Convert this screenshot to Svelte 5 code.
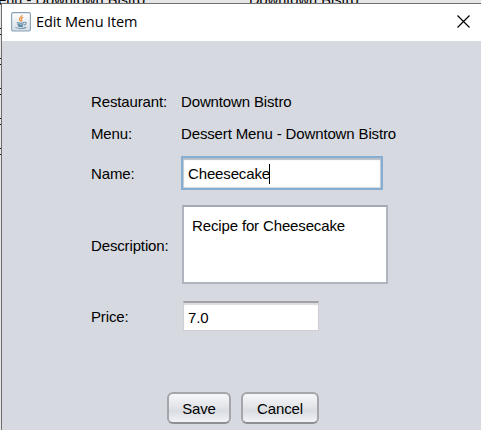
<script>
  let name = $state('Cheesecake');
  let description = $state('Recipe for Cheesecake');
  let price = $state('7.0');
</script>

<div class="desktop">
  <div class="behind">
    <span class="first">Menu - Downtown Bistro</span>
    <span class="second">Downtown Bistro</span>
  </div>
  <div class="ticks">
    {#each [0, 1, 2, 3, 4] as tick (tick)}
      <i></i>
    {/each}
  </div>

  <section class="dialog">
    <header>
      <svg class="java" width="20" height="20" viewBox="0 0 20 20">
        <defs>
          <linearGradient id="tile" x1="0" y1="0" x2="0" y2="1">
            <stop offset="0" stop-color="#fff" />
            <stop offset="1" stop-color="#d5dde5" />
          </linearGradient>
        </defs>
        <rect x=".6" y=".6" width="18.8" height="18.4" rx="1.5" fill="url(#tile)" stroke="#87a0b5" stroke-width="1.1" />
        <path d="M10.8 3c.8 1.8-2.6 2.6-2.4 4.4.1 1 1 1.4 1.2 2.2M12.4 5.2c-2.3 1-2.5 1.9-1.7 2.7.5.6.2 1.1-.3 1.6" fill="none" stroke="#e99343" stroke-width="1.2" />
        <path d="M5.8 10.6c1.5.9 6 .8 7.4 0M6.6 12.4c1.6.8 4.4.8 5.8 0M7.2 14c1.3.5 3.6.5 4.6 0" fill="none" stroke="#5382a1" stroke-width="1.2" />
        <path d="M13.3 10.4c2.4-.7 2.6 2-.2 2.7M4.4 15.4c2 1.4 8.8 1.4 10.8-.2" fill="none" stroke="#6f94ae" stroke-width="1.1" />
      </svg>
      <h1>Edit Menu Item</h1>
      <svg class="close" width="13" height="13" viewBox="0 0 13 13">
        <path d="M.5.5l12 12M12.5.5l-12 12" stroke="#000" stroke-width="1.2" />
      </svg>
    </header>

    <div class="form">
      <span>Restaurant:</span><span>Downtown Bistro</span>
      <span>Menu:</span><span>Dessert Menu - Downtown Bistro</span>
      <span>Name:</span>
      <div class="name"><span class="value">{name}</span><i class="caret"></i></div>
      <span>Description:</span>
      <div class="description">{description}</div>
      <span>Price:</span>
      <div class="price">{price}</div>
    </div>

    <footer>
      <button class="save">Save</button>
      <button class="cancel">Cancel</button>
    </footer>
  </section>
</div>

<style>
  .desktop {
    position: relative;
    width: 481px;
    height: 430px;
    overflow: hidden;
    background: #e6e6e6;
    color: #000;
    font: 15px/18px "Liberation Sans", Arial, sans-serif;
    letter-spacing: -.14px;
    white-space: nowrap;
  }
  .behind span {
    position: absolute;
    top: -8px;
    font-size: 14.5px;
    line-height: 16px;
    letter-spacing: .05px;
  }
  .behind .first { left: -14px; }
  .behind .second { left: 249px; }
  .ticks {
    position: absolute;
    left: 0;
    top: 28px;
    display: flex;
    flex-direction: column;
    gap: 23px;
  }
  .ticks i {
    width: 2px;
    height: 5px;
    border-top: 1px solid #111;
    border-bottom: 1px solid #111;
  }
  .dialog {
    position: absolute;
    left: 1px;
    top: 3px;
    width: 490px;
    height: 440px;
    box-sizing: border-box;
    border: 1px solid #6e6e70;
    background: #d6d9e0;
  }
  header {
    display: flex;
    align-items: center;
    width: 479px;
    height: 37px;
    box-sizing: border-box;
    padding: 0 11px 0 9px;
    background: #fff;
  }
  .java { margin-top: -2px; }
  h1 {
    flex: 1;
    margin: -1px 0 0 5px;
    font: 14.5px/20px "Open Sans", "Noto Sans", sans-serif;
    letter-spacing: -.12px;
  }
  .close { margin: 0 0 2px; }
  .form {
    display: grid;
    grid-template-columns: 90px 210px;
    grid-template-rows: 32px 32px 48px 95px 47px;
    align-items: center;
    padding: 45px 0 0 89px;
  }
  .name, .description, .price {
    box-sizing: border-box;
    background: #fff;
  }
  .name {
    display: flex;
    align-items: center;
    width: 202px;
    height: 34px;
    margin-top: -2px;
    padding: 2px 5px 0;
    border: 2px solid #86add2;
    box-shadow: inset 0 2px 1px #b8bdc5, inset 1px 0 1px #c3c8d0, inset -1px 0 1px #c3c8d0, inset 0 -1px 1px #d6dae0;
  }
  .caret { width: 1px; height: 20px; margin-left: -1px; background: #000; }
  .description {
    width: 206px;
    height: 79px;
    margin: -3px 0 0 1px;
    padding: 10px 8px;
    border: 2px solid #a9adb8;
    border-color: #a5a9b4 #b0b4be #b0b4be #b0b4be;
  }
  .price {
    width: 136px;
    height: 30px;
    margin: -2px 0 0 2px;
    padding: 6px 4px;
    border: 1px solid #cdcfd3;
    border-top: 2px solid #a0a2a6;
    box-shadow: inset 0 2px 1px #dcdcdc;
  }
  footer {
    display: flex;
    gap: 10px;
    padding: 52px 0 0 165px;
  }
  button {
    height: 32px;
    padding: 1px 0 0;
    border: 2px solid #a4a6ab;
    border-bottom-color: #8c8f95;
    border-radius: 6px;
    background: linear-gradient(#f6f7f9, #e3e5e9 45%, #d9dce2 60%, #f1f3f6);
    color: #000;
    font: inherit;
    letter-spacing: -.14px;
  }
  .save { width: 64px; }
  .cancel { width: 78px; }
</style>
